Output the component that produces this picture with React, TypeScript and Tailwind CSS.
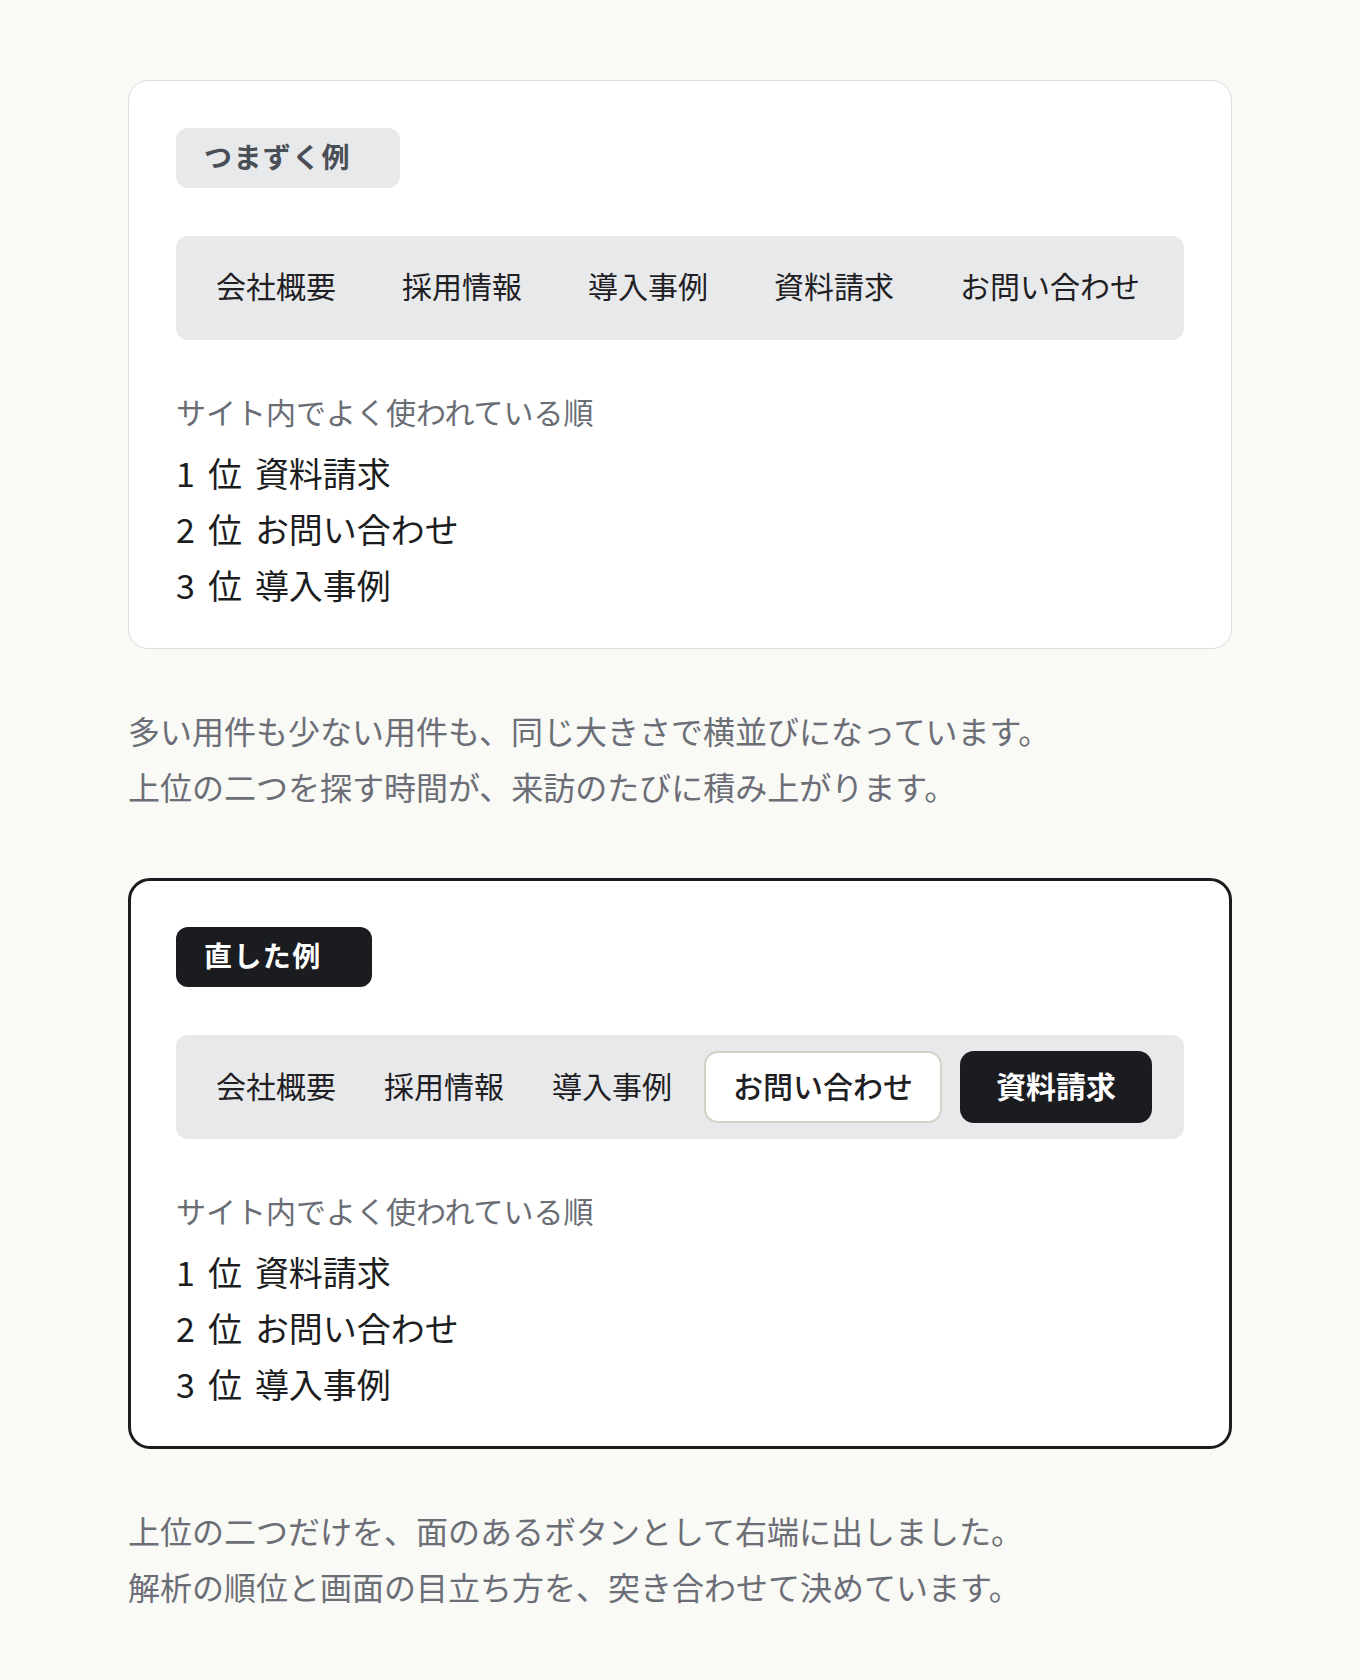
const navItems = ['会社概要', '採用情報', '導入事例', '資料請求', 'お問い合わせ'];
const ranking = ['資料請求', 'お問い合わせ', '導入事例'];

function Ranking() {
  return (
    <>
      <p className="mt-[49px] text-[30px] leading-[45px] text-[#6a6d74]">サイト内でよく使われている順</p>
      <ol className="mt-[11px] text-[34px] leading-[56px] text-[#1c1d21]">
        {ranking.map((name, i) => (
          <li key={name} className="flex gap-[13px]">
            <span>{i + 1}</span>
            <span>位</span>
            <span>{name}</span>
          </li>
        ))}
      </ol>
    </>
  );
}

function BeforeCard() {
  return (
    <section className="rounded-[20px] border border-[#dfdfd7] bg-white px-[47px] pt-[47px] pb-[35px]">
      <span className="inline-flex h-[60px] items-center rounded-[12px] bg-[#e8e9eb] pb-[4px] pl-[28px] pr-[49px] text-[28px] font-bold tracking-[0.05em] text-[#4a4f57]">
        つまずく例
      </span>
      <nav className="mt-[48px] flex h-[104px] items-center justify-between rounded-[12px] bg-[#e8e9eb] pl-[24px] pr-[28px] pb-[5px]">
        {navItems.map((item) => (
          <a key={item} className="px-4 text-[30px] text-[#1f2023]">
            {item}
          </a>
        ))}
      </nav>
      <Ranking />
    </section>
  );
}

function AfterCard() {
  return (
    <section className="rounded-[22px] border-[3px] border-[#1b1c20] bg-white px-[45px] pt-[46px] pb-[34px]">
      <span className="inline-flex h-[60px] items-center rounded-[12px] bg-[#1b1c20] pb-[4px] pl-[28px] pr-[50px] text-[28px] font-bold tracking-[0.05em] text-white">
        直した例
      </span>
      <nav className="mt-[48px] flex h-[104px] items-center gap-4 rounded-[12px] bg-[#e8e9eb] px-[24px]">
        {navItems.slice(0, 3).map((item) => (
          <a key={item} className="px-4 pb-[4px] text-[30px] text-[#1f2023]">
            {item}
          </a>
        ))}
        <a className="flex h-[72px] items-center rounded-[14px] border-2 border-[#d2d2c7] bg-white px-[27px] pb-[4px] text-[30px] font-medium text-[#1f2023]">
          お問い合わせ
        </a>
        <a className="ml-[2px] flex h-[72px] items-center rounded-[14px] bg-[#1b1c20] px-[36px] pb-[4px] text-[30px] font-bold text-white">
          資料請求
        </a>
      </nav>
      <Ranking />
    </section>
  );
}

export default function App() {
  return (
    <main className="min-h-screen bg-[#f9f9f5] pt-[80px] pb-[64px] font-['Noto_Sans_CJK_JP','Noto_Sans',sans-serif]">
      <div className="mx-auto w-[1104px]">
        <BeforeCard />
        <p className="mt-[53px] text-[32px] leading-[56px] text-[#6b6e76]">
          多い用件も少ない用件も、同じ大きさで横並びになっています。
          <br />
          上位の二つを探す時間が、来訪のたびに積み上がります。
        </p>
        <div className="mt-[64px]">
          <AfterCard />
        </div>
        <p className="mt-[53px] text-[32px] leading-[56px] text-[#6b6e76]">
          上位の二つだけを、面のあるボタンとして右端に出しました。
          <br />
          解析の順位と画面の目立ち方を、突き合わせて決めています。
        </p>
      </div>
    </main>
  );
}
